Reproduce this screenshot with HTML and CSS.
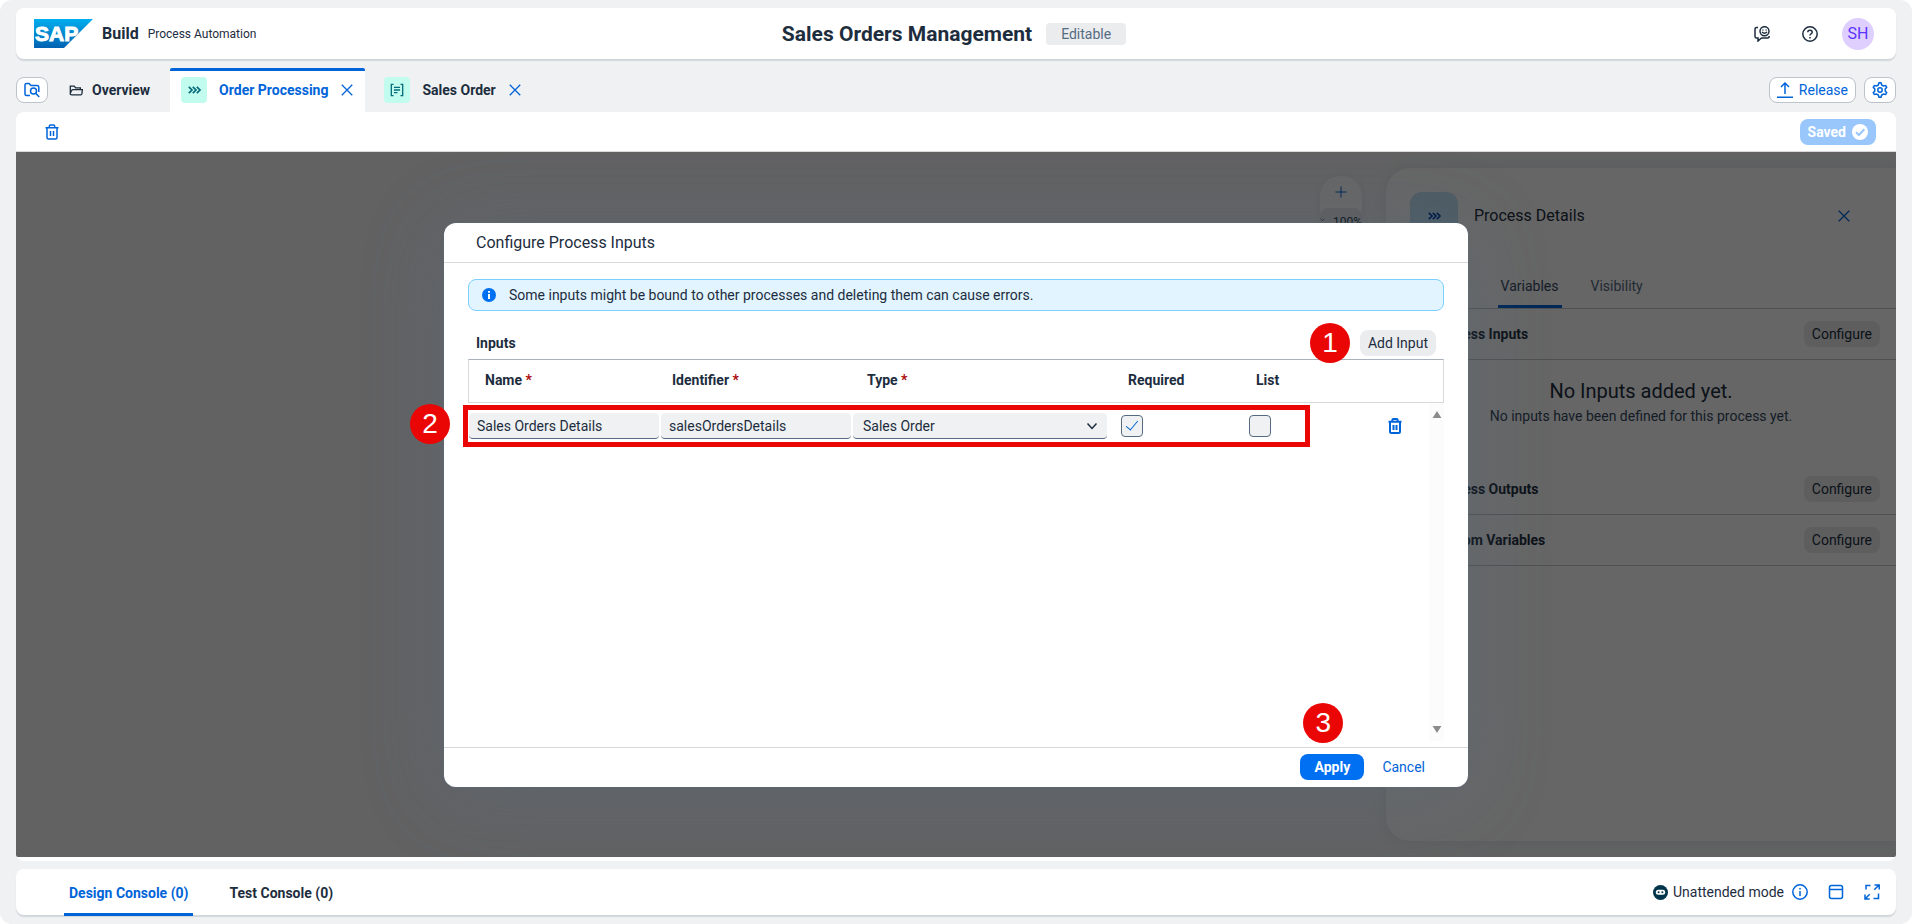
FILE: index.html
```html
<!DOCTYPE html>
<html lang="en">
<head>
<meta charset="utf-8">
<title>Sales Orders Management</title>
<link rel="stylesheet" href="styles.css">
</head>
<body>
<svg class="sprite" aria-hidden="true">
  <symbol id="i-trash" viewBox="0 0 16 16"><path d="M1.500 3.700h13M5.300 3.500V2.200q0-1.200 1.200-1.200h3q1.200 0 1.200 1.200v1.300M3 3.900v9.600q0 1.500 1.500 1.500h7q1.500 0 1.500-1.500V3.900M6.500 7v5M9.500 7v5"/></symbol>
  <symbol id="i-close" viewBox="0 0 16 16"><path d="M2 2l12 12M14 2L2 14"/></symbol>
  <symbol id="i-process" viewBox="0 0 16 16"><path stroke-width="1.700" d="M2.800 4.800L6 8l-3.200 3.200M6.800 4.800L10 8l-3.200 3.200M10.800 4.800L14 8l-3.200 3.200"/></symbol>
</svg>
<div class="app">
  <header class="shell card">
    <div class="brand">
      <svg class="logo" viewBox="0 0 59 29" role="img" aria-label="SAP">
        <defs><linearGradient id="sap" x1="0" y1="0" x2="0" y2="1"><stop offset="0" stop-color="#00aeef"/><stop offset="1" stop-color="#0062b1"/></linearGradient></defs>
        <path d="M0 0h59L30 29H0z" fill="url(#sap)"/>
        <text class="logo-text" x="1" y="22">SAP</text>
      </svg>
      <span class="brand-name">Build</span>
      <span class="brand-sub">Process Automation</span>
    </div>
    <div class="project">
      <h1 class="project-title">Sales Orders Management</h1>
      <span class="badge">Editable</span>
    </div>
    <div class="shell-actions">
      <button class="plain dark" aria-label="Feedback"><svg class="icon" viewBox="0 0 16 16"><circle cx="10.500" cy="5.200" r="4.500"/><path d="M8 6q2.500 2.400 5 0M8.900 3.500v1M12.100 3.500v1M4 1.500H2.500Q1 1.500 1 3v7.500Q1 12 2.500 12H4v3l3.500-3h6.200q1.500 0 1.500-2"/></svg></button>
      <button class="plain dark" aria-label="Help"><svg class="icon" viewBox="0 0 16 16"><circle cx="8" cy="8" r="7.200"/><path d="M5.800 6.300q0-2 2.200-2t2.200 1.900q0 1.100-1.200 1.700-1 .5-1 1.500M8 11v1.500"/></svg></button>
      <span class="avatar">SH</span>
    </div>
  </header>

  <nav class="tabs">
    <button class="outlined square" aria-label="Browse files"><svg class="icon" viewBox="0 0 16 16"><path d="M6 13.500H2.500Q1 13.500 1 12V3q0-1.500 1.500-1.500H5l2 2h6q1.800 0 1.800 1.500v5"/><circle cx="9.500" cy="9" r="3"/><path d="M11.800 11.300l3.400 3.700"/></svg></button>
    <a class="tab first" href="#overview"><svg class="icon small dark" viewBox="0 0 16 16"><path d="M1.500 12V3.500h4.500l1.500 2h5.500v2M3.300 13.500h10.200q1 0 1.200-1l.6-5H4.500q-1 0-1.300.8L1.300 12q0 1.500 2 1.500z"/></svg>Overview</a>
    <div class="tab active"><span class="tile"><svg class="icon" viewBox="0 0 16 16"><use href="#i-process"/></svg></span><a href="#order">Order Processing</a><button class="plain close" aria-label="Close Order Processing"><svg class="icon small"><use href="#i-close"/></svg></button></div>
    <div class="tab"><span class="tile"><svg class="icon small" viewBox="0 0 16 16"><path d="M4 1.500H1.500v13H4M12 1.500h2.500v13H12M4.500 5h7M4.500 8h7M4.500 11h4"/></svg></span><a href="#sales">Sales Order</a><button class="plain close" aria-label="Close Sales Order"><svg class="icon small"><use href="#i-close"/></svg></button></div>
    <div class="tab-actions">
      <button class="outlined"><svg class="icon" viewBox="0 0 16 16"><path d="M8 12V1M4 5l4-4 4 4M0 15.200h16"/></svg>Release</button>
      <button class="outlined square" aria-label="Settings"><svg class="icon" viewBox="0 0 16 16"><path d="M6.300 3L7 .8h2L9.700 3l1.700 1 2.300-.5 1 1.800L13.200 7v2l1.500 1.700-1 1.800-2.300-.5-1.700 1L9 15.200H7L6.300 13l-1.700-1-2.300.5-1-1.800L2.800 9V7L1.300 5.300l1-1.800L4.600 4z"/><circle cx="8" cy="8" r="2.200"/></svg></button>
    </div>
  </nav>

  <main class="workspace">
    <div class="toolbar">
      <button class="plain" aria-label="Delete process"><svg class="icon"><use href="#i-trash"/></svg></button>
      <span class="saved">Saved<svg class="saved-icon" viewBox="0 0 16 16"><circle cx="8" cy="8" r="8" fill="#fff"/><path d="M4 8.300l2.800 2.700L12.300 5.200" fill="none" stroke="#99c7fb" stroke-width="2"/></svg></span>
    </div>
    <div class="canvas">
      <div class="zoombar"><button class="plain zoom-in" aria-label="Zoom in"><svg class="icon thin" viewBox="0 0 16 16"><path d="M8 2.500v11M2.500 8h11"/></svg></button><div class="zoom-level"><svg class="chevron" viewBox="0 0 8 8"><path d="M1 2l3 3 3-3"/></svg>100%</div></div>
      <aside class="details">
        <div class="details-head"><span class="details-tile"><svg class="icon" viewBox="0 0 16 16"><use href="#i-process"/></svg></span><h2 class="details-title">Process Details</h2><button class="plain" aria-label="Close details"><svg class="icon small"><use href="#i-close"/></svg></button></div>
        <div class="details-tabs"><a href="#general">General</a><a class="selected" href="#variables">Variables</a><a href="#visibility">Visibility</a></div>
        <div class="section"><h3>Process Inputs</h3><button class="soft">Configure</button></div>
        <div class="empty"><p class="empty-title">No Inputs added yet.</p><p>No inputs have been defined for this process yet.</p></div>
        <div class="section"><h3>Process Outputs</h3><button class="soft">Configure</button></div>
        <div class="section"><h3>Custom Variables</h3><button class="soft">Configure</button></div>
      </aside>
      <div class="overlay">
        <section class="dialog" role="dialog" aria-labelledby="dlg-title">
          <h2 class="dialog-title" id="dlg-title">Configure Process Inputs</h2>
          <div class="dialog-body">
            <div class="strip"><svg class="strip-icon" viewBox="0 0 14 14"><circle cx="7" cy="7" r="7" fill="#0070f2"/><path d="M7 3v1.800M7 6v5" stroke="#fff" stroke-width="2"/></svg>Some inputs might be bound to other processes and deleting them can cause errors.</div>
            <div class="table-bar"><h3>Inputs</h3><div class="anchor"><span class="marker marker-add">1</span><button class="soft">Add Input</button></div></div>
            <div class="table-area">
              <table class="inputs">
                <colgroup><col class="c-text"><col class="c-text"><col class="c-type"><col class="c-check"><col class="c-check"><col></colgroup>
                <thead><tr><th class="h-name">Name <i>*</i></th><th class="h-id">Identifier <i>*</i></th><th class="h-type">Type <i>*</i></th><th class="h-req">Required</th><th class="h-list">List</th><th></th></tr></thead>
                <tbody><tr>
                  <td><input class="field" type="text" aria-label="Name" value="Sales Orders Details"></td>
                  <td><input class="field" type="text" aria-label="Identifier" value="salesOrdersDetails"></td>
                  <td><div class="select-wrap"><select class="field" aria-label="Type"><option>Sales Order</option></select><svg class="arrow" viewBox="0 0 16 16"><path d="M3.500 5.500L8 10.500l4.500-5"/></svg></div></td>
                  <td><input class="check" type="checkbox" aria-label="Required" checked></td>
                  <td><input class="check" type="checkbox" aria-label="List"></td>
                  <td class="row-action"><button class="plain" aria-label="Delete input"><svg class="icon strong"><use href="#i-trash"/></svg></button></td>
                </tr></tbody>
              </table>
              <div class="scroll" aria-hidden="true"><svg viewBox="0 0 10 8"><path d="M5 0l5 8H0z"/></svg><svg viewBox="0 0 10 8"><path d="M5 8l5-8H0z"/></svg></div>
              <div class="frame"><span class="marker marker-row">2</span></div>
            </div>
          </div>
          <footer class="dialog-foot"><div class="anchor"><span class="marker marker-apply">3</span><button class="primary">Apply</button></div><button class="plain cancel">Cancel</button></footer>
        </section>
      </div>
    </div>
  </main>

  <footer class="console card">
    <a class="console-tab selected" href="#design">Design Console (0)</a>
    <a class="console-tab" href="#test">Test Console (0)</a>
    <div class="console-actions">
      <svg class="bot" viewBox="0 0 16 16"><circle cx="8" cy="8" r="8" fill="#00344a"/><rect x="3" y="5" width="10" height="5.500" rx="2.700" fill="#fff"/><circle cx="6" cy="7.700" r="1.100" fill="#00344a"/><circle cx="10" cy="7.700" r="1.100" fill="#00344a"/></svg>
      <span>Unattended mode</span>
      <button class="plain info" aria-label="Information"><svg class="icon" viewBox="0 0 16 16"><circle cx="8" cy="8" r="7.200"/><path d="M8 4v1.500M8 7v5"/></svg></button>
      <button class="plain window" aria-label="Restore console"><svg class="icon" viewBox="0 0 16 16"><rect x="1.500" y="1.500" width="13" height="13" rx="2"/><path d="M1.500 5.500h13"/></svg></button>
      <button class="plain" aria-label="Full screen"><svg class="icon" viewBox="0 0 16 16"><path d="M6.500 1.500H2v4M14.500 9.500v5h-5M10.500 1h4.700v4.500M15 1l-4.700 4.700M1 10.500V15h4.700M1 15l4.700-4.700"/></svg></button>
    </div>
  </footer>
</div>
</body>
</html>
```
FILE: styles.css
```css
* { box-sizing: border-box; }
body { margin: 0; background: #fff; color: #1d2d3e; font: 14px/20px Roboto, "Liberation Sans", sans-serif; }
h1, h2, h3, p { margin: 0; font-size: inherit; }
a { color: inherit; text-decoration: none; }
button, input, select { font: inherit; color: inherit; }
button { cursor: pointer; }
.sprite { display: none; }
.app { display: flex; flex-direction: column; min-height: 100vh; padding: 8px 16px; background: #eff1f2; border-radius: 12px; }
.card { background: #fff; border-radius: 8px; box-shadow: 0 2px 1px #d1d7da; }
.icon { display: block; width: 16px; height: 16px; fill: none; stroke: currentColor; stroke-width: 1.5; }
.icon.small { width: 14px; height: 14px; }
.icon.strong { stroke-width: 2; }
.icon.thin { stroke-width: 1; }
.plain { display: inline-flex; align-items: center; padding: 0; border: 0; background: none; color: #0064d9; }
.dark { color: #1d2d3e; }

.shell { display: grid; grid-template-columns: 1fr auto 1fr; align-items: center; height: 51px; padding: 0 22px 0 18px; }
.brand { display: flex; align-items: center; gap: 9px; }
.logo { width: 59px; height: 29px; }
.logo-text { font: bold 21px "Liberation Sans", sans-serif; fill: #fff; stroke: #fff; stroke-width: 1; }
.brand-name { font-size: 16px; font-weight: 700; }
.brand-sub { font-size: 12px; }
.project { display: flex; align-items: center; gap: 14px; }
.project-title { font-size: 21px; font-weight: 700; line-height: 24px; }
.badge { padding: 1px 15px; border-radius: 4px; background: #eaecee; color: #556b82; }
.shell-actions { display: flex; justify-content: flex-end; align-items: center; gap: 32px; }
.avatar { width: 32px; margin-left: -8px; border-radius: 50%; background: #decffe; color: #5b33ff; font-size: 16px; line-height: 32px; text-align: center; }

.tabs { display: flex; height: 44px; margin-top: 9px; align-items: center; font-weight: 700; }
.outlined { display: flex; align-items: center; gap: 6px; height: 26px; padding: 0 7px; border: 1px solid #bcc3ca; border-radius: 8px; background: #fff; color: #0064d9; font-weight: 400; }
.outlined.square { width: 32px; }
.tab { display: flex; align-items: center; gap: 12px; height: 44px; padding: 0 11px; border-top: 3px solid transparent; border-bottom: 3px solid transparent; }
.tab.first { gap: 9px; padding: 0 20px 0 21px; }
.tab.active { background: #fff; color: #0064d9; border-top-color: #0064d9; border-bottom-color: #fff; border-radius: 2px 2px 0 0; margin-right: 8px; }
.tile { display: grid; place-items: center; width: 26px; height: 26px; border-radius: 4px; background: #c2fcee; color: #046c7a; }
.tab-actions { display: flex; gap: 8px; margin-left: auto; }

.workspace { display: flex; flex-direction: column; flex: 1; padding-bottom: 4px; background: #fff; border-radius: 8px; }
.toolbar { display: flex; align-items: center; justify-content: space-between; height: 40px; padding: 0 20px 0 28px; border-bottom: 1px solid #d9d9d9; }
.saved { display: flex; align-items: center; gap: 6px; height: 26px; padding: 0 8px; border-radius: 8px; background: #99c7fb; color: #fff; font-weight: 700; }
.saved-icon { width: 16px; height: 16px; }
.canvas { position: relative; flex: 1; min-height: 480px; overflow: hidden; background: #f5f6f7; border-radius: 0 0 2px 2px; }

.zoombar { position: absolute; top: 24px; right: 534px; width: 42px; background: #fff; border-radius: 20px; box-shadow: 0 0 8px #dfe4e8; }
.zoom-in { width: 42px; height: 32px; justify-content: center; }
.zoom-level { display: flex; gap: 8px; padding-top: 4px; background: #eaecee; border-radius: 8px; font-size: 12px; }
.chevron { width: 8px; height: 8px; margin-top: 4px; fill: none; stroke: currentColor; stroke-width: 1; }
.details { position: absolute; top: 16px; right: 0; bottom: 16px; width: 510px; background: #fff; border-radius: 24px 0 0 24px; box-shadow: 0 0 16px #dfe4e8; }
.details-head { display: flex; align-items: center; gap: 16px; padding: 24px 45px 0 24px; }
.details-tile { display: grid; place-items: center; width: 48px; height: 48px; border-radius: 12px; background: #c2e6fa; color: #0040b0; }
.details-title { flex: 1; font-size: 16px; font-weight: 400; }
.details-tabs { display: flex; gap: 26px; height: 69px; padding: 36px 0 0 32px; border-bottom: 1px solid #c4cacf; color: #556b82; }
.details-tabs a { height: 32px; padding: 0 3px; }
.details-tabs .selected { color: #354a5f; border-bottom: 3px solid #0064d9; }
.section { display: flex; align-items: center; justify-content: space-between; height: 51px; padding: 0 16px 0 48px; border-bottom: 1px solid #c4cacf; }
.soft { height: 26px; padding: 0 8px; border: 0; border-radius: 8px; background: #eaecee; }
.empty { height: 104px; padding: 19px 24px 0; color: #354a5f; text-align: center; }
.empty-title { margin-bottom: 3px; color: #1d2d3e; font-size: 20px; line-height: 24px; }

.overlay { position: absolute; inset: 0; display: flex; align-items: center; justify-content: center; background: rgba(0, 0, 0, .6); }
.dialog { display: flex; flex-direction: column; width: 1024px; max-width: 92%; height: 80%; background: #fff; border-radius: 12px; box-shadow: 0 0 2px rgba(91, 115, 139, .8), 0 8px 80px rgba(91, 115, 139, .3); }
.dialog-title { padding: 10px 32px 9px; border-bottom: 1px solid #d9d9d9; font-size: 16px; font-weight: 400; }
.dialog-body { display: flex; flex: 1; flex-direction: column; padding: 16px 24px 6px; }
.strip { display: flex; align-items: center; gap: 13px; padding: 5px 13px; border: 1px solid #7bcfff; border-radius: 8px; background: #e1f4ff; }
.strip-icon { width: 14px; height: 14px; }
.table-bar { display: flex; align-items: center; justify-content: space-between; height: 48px; padding: 16px 8px 0; }
.anchor { position: relative; }
.table-area { position: relative; flex: 1; }
.inputs { width: 100%; border-collapse: separate; border-spacing: 0; table-layout: fixed; }
.c-text { width: 192px; }
.c-type { width: 268px; }
.c-check { width: 128px; }
th { height: 44px; padding: 0 0 2px; border: solid #d9d9d9; border-width: 1px 0; border-top-color: #a8b2bd; text-align: left; }
th:first-child { border-left-width: 1px; }
th:last-child { border-right-width: 1px; }
th i { color: #aa0808; font-style: normal; }
.h-name { padding-left: 16px; }
.h-id { padding-left: 12px; }
.h-type { padding-left: 15px; }
.h-req, .h-list { padding-left: 8px; }
td { padding: 10px 0 0 1px; vertical-align: middle; }
.field { display: block; width: 190px; height: 26px; padding: 1px 8px 0; border: 0; border-bottom: 1px solid #556b82; border-radius: 4px; background: #eff1f2; appearance: none; }
.select-wrap { position: relative; width: 254px; }
.select-wrap .field { width: 100%; padding-left: 10px; }
.arrow { position: absolute; top: 5px; right: 7px; width: 16px; height: 16px; fill: none; stroke: #1d2d3e; stroke-width: 1.5; pointer-events: none; }
.check { display: grid; place-items: center; width: 22px; height: 22px; margin: 0; border: 1px solid #556b82; border-radius: 4px; background: #eff1f2; appearance: none; }
.check:checked::before { content: ""; width: 5px; height: 11px; margin-top: -3px; border: solid #0064d9; border-width: 0 1px 1px 0; transform: rotate(40deg); }
.row-action { padding-right: 41px; text-align: right; }
.row-action .plain { display: flex; margin-left: auto; }
.scroll { position: absolute; top: 44px; right: 0; bottom: 0; display: flex; flex-direction: column; justify-content: space-between; align-items: center; width: 15px; padding: 8px 0; background: #fcfcfc; }
.scroll svg { width: 10px; height: 7px; fill: #8b8b8b; }
.frame { position: absolute; top: 46px; left: -5px; width: 847px; height: 42px; border: 5px solid #eb0606; pointer-events: none; }
.marker { position: absolute; width: 40px; height: 40px; border-radius: 50%; background: #eb0606; color: #fff; font: 28px/40px "Liberation Sans", sans-serif; text-align: center; }
.marker-add { z-index: 1; top: -7px; right: 86px; }
.marker-row { top: -6px; left: -58px; }
.marker-apply { bottom: 37px; left: 3px; }
.dialog-foot { display: flex; align-items: center; justify-content: flex-end; gap: 18px; height: 40px; padding: 0 43px 0 0; border-top: 1px solid #d9d9d9; }
.primary { display: block; width: 64px; height: 26px; padding: 0; border: 0; border-radius: 8px; background: #0070f2; color: #fff; font-weight: 700; }

.console { display: flex; align-items: center; gap: 31px; height: 46px; margin-top: 8px; margin-bottom: 1px; padding: 0 16px 0 48px; font-weight: 700; }
.console-tab { padding: 14px 5px 10px; border-bottom: 3px solid transparent; }
.console-tab.selected { color: #0064d9; border-bottom-color: #0064d9; }
.console-actions { display: flex; align-items: center; margin-left: auto; font-weight: 400; }
.bot { width: 15px; height: 15px; margin-right: 5px; }
.info { margin-left: 8px; }
.window { margin: 0 20px; }
```
